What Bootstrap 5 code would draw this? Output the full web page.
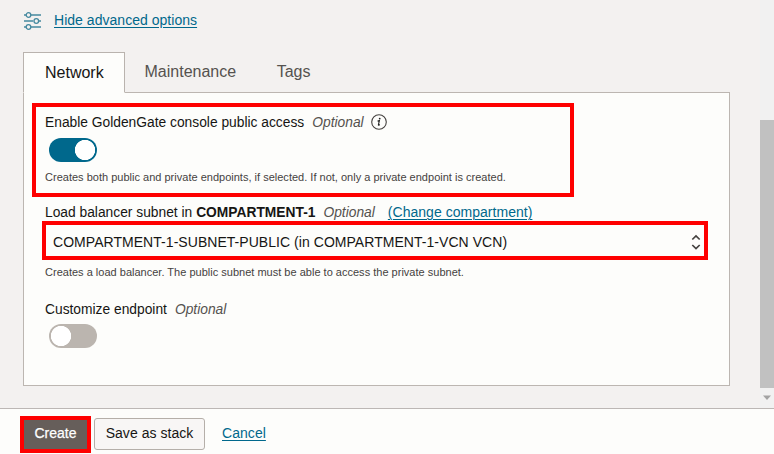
<!DOCTYPE html>
<html lang="en">
<head>
<meta charset="utf-8">
<meta name="viewport" content="width=device-width, initial-scale=1">
<title>Advanced options</title>
<link href="https://cdn.jsdelivr.net/npm/bootstrap@5.3.0/dist/css/bootstrap.min.css" rel="stylesheet">
<style>
  body { font: 14px/20px "Liberation Sans", Arial, sans-serif; color: #161513; background: #fdfdfb; height: 454px; }
  a { color: #00688c; text-underline-offset: 2px; text-decoration-thickness: 1px; }
  .scroll-area { height: 408px; background: #f3f1f0; }
  .content-col { padding: 10px 30px 0 23px; }
  .adv-link { gap: 12px; height: 20px; letter-spacing: .03px; }
  .option-tabs { margin-top: 22px; border: 0; position: relative; z-index: 1; }
  .option-tabs .nav-link { height: 41px; padding: 0 20px 0 18.5px; line-height: 38px; font-size: 16px; color: #55524f; border: 1px solid transparent; border-radius: 0; margin: 0; }
  .option-tabs .nav-link.active { color: #161513; background: #fdfdfb; border-color: #b9b3ae; border-bottom-color: #fdfdfb; line-height: 40px; width: 102px; padding: 0 0 0 21px; }
  .option-panel { margin-top: -1px; width: 707px; height: 294px; background: #fdfdfb; border: 1px solid #bcb6b1; padding: 10px 8px 0; }
  .marked { border: 4px solid #fe0000; }
  .access-box { width: 542px; height: 94px; padding: 6px 0 0 9px; }
  .field-label { font-size: 13.8px; line-height: 20px; white-space: nowrap; }
  .field-label a { font-size: 14px; margin-left: 13px; letter-spacing: .03px; }
  .optional { font-style: italic; color: #55524f; margin-left: 8px; }
  .info-icon { margin: -1px 0 1px 7px; }
  .help { font-size: 11px; line-height: 14px; letter-spacing: .01px; color: #45423f; white-space: nowrap; }
  .switch.form-check-input { display: block; float: none; width: 48px; height: 24px; margin: 4px 0 0 4px; padding: 0; border: 0; border-radius: 12px; background-color: #bbb5af; background-image: radial-gradient(circle at 12px 12px, #fff 9.8px, transparent 10.4px); background-size: 100% 100%; background-position: 0 0; box-shadow: none; }
  .switch.form-check-input:checked { margin-top: 5px; background-color: #00688c; background-image: radial-gradient(circle at 36px 12px, #fff 9.8px, transparent 10.4px); background-position: 0 0; }
  .lower { padding-left: 13px; }
  .subnet-label { margin-top: 5px; height: 19px; }
  .subnet-picker { width: 666px; height: 39px; margin: 0 0 0 10px; padding: 3px 3px 0 7px; background: #fdfdfb; letter-spacing: .045px; }
  .subnet-help { margin-top: 5px; }
  .endpoint-field { padding-top: 21px; }
  .actions { height: 46px; border-top: 1px solid #bcb7b5; padding: 7px 0 0 20px; }
  .actions .btn { font-size: 14px; line-height: 20px; padding: 0; }
  .actions .create-btn { width: 71px; height: 37px; border: 4px solid #fe0000; border-radius: 0; background: #665e5a; color: #fff; padding-bottom: 3px; -webkit-text-stroke: .25px #fff; }
  .actions .stack-btn { width: 111px; height: 32px; margin: 2px 0 0 3px; border: 1px solid #b5afa9; border-radius: 3px; background: #f8f6f5; color: #161513; padding-bottom: 3px; letter-spacing: .04px; }
  .cancel-link { margin: 7px 0 0 17px; letter-spacing: .05px; }
  .scroll-track { width: 14px; background: #f1f1f1; padding-top: 120px; }
  .scroll-thumb { height: 268px; background: #c1c1c1; }
</style>
</head>
<body class="overflow-hidden">
<main class="scroll-area d-flex">
  <div class="content-col flex-grow-1">
    <div class="adv-link d-flex align-items-center">
      <svg width="19" height="20" viewBox="0 0 19 20" fill="none" stroke="#45899f" stroke-width="1.3">
        <path d="M1 5h2.2M7.8 5H18M1 11h9.2M15.8 11H18M1 17h2.2M7.8 17H18"/>
        <circle cx="5.5" cy="5" r="2.3"/><circle cx="13.3" cy="11" r="2.3"/><circle cx="5.5" cy="17" r="2.3"/>
      </svg>
      <a href="#">Hide advanced options</a>
    </div>
    <nav class="nav nav-tabs option-tabs">
      <a class="nav-link active" href="#">Network</a>
      <a class="nav-link" href="#">Maintenance</a>
      <a class="nav-link" href="#">Tags</a>
    </nav>
    <section class="option-panel">
      <div class="access-box marked">
        <div class="field-label d-flex align-items-center">Enable GoldenGate console public access<span class="optional">Optional</span>
          <svg class="info-icon" width="16" height="16" viewBox="0 0 16 16"><circle cx="8" cy="8" r="7.3" fill="none" stroke="#44413f" stroke-width="1.1"/><circle cx="8.7" cy="4.6" r=".9" fill="#222"/><path d="M6.6 7.1l1.8-.5-1 4.3q0 .8 1.4-.4" fill="none" stroke="#222" stroke-width="1.1"/></svg>
        </div>
        <input class="form-check-input switch" type="checkbox" role="switch" aria-label="Public access" checked>
        <div class="help mt-2">Creates both public and private endpoints, if selected. If not, only a private endpoint is created.</div>
      </div>
      <div class="field-label subnet-label lower">Load balancer subnet in <b>COMPARTMENT-1</b><span class="optional">Optional</span><a href="#">(Change compartment)</a></div>
      <div class="subnet-picker marked d-flex align-items-center justify-content-between">
        <span>COMPARTMENT-1-SUBNET-PUBLIC (in COMPARTMENT-1-VCN VCN)</span>
        <svg width="10" height="16" viewBox="0 0 10 16" fill="none" stroke="#44413f" stroke-width="1.7"><path d="M1.3 5.5L5 2l3.7 3.5M1.3 11L5 14.5 8.7 11"/></svg>
      </div>
      <div class="help lower subnet-help">Creates a load balancer. The public subnet must be able to access the private subnet.</div>
      <div class="lower endpoint-field">
        <div class="field-label">Customize endpoint<span class="optional">Optional</span></div>
        <input class="form-check-input switch" type="checkbox" role="switch" aria-label="Customize endpoint">
      </div>
    </section>
  </div>
  <div class="scroll-track">
    <div class="scroll-thumb"></div>
    <svg class="d-block" width="14" height="20" viewBox="0 0 14 20"><path d="M3 7.5h8l-4 4.5z" fill="#a3a3a3"/></svg>
  </div>
</main>
<footer class="actions d-flex align-items-start">
  <button class="btn create-btn" type="button">Create</button>
  <button class="btn stack-btn" type="button">Save as stack</button>
  <a class="cancel-link" href="#">Cancel</a>
</footer>
<script src="https://cdn.jsdelivr.net/npm/bootstrap@5.3.0/dist/js/bootstrap.bundle.min.js"></script>
</body>
</html>
